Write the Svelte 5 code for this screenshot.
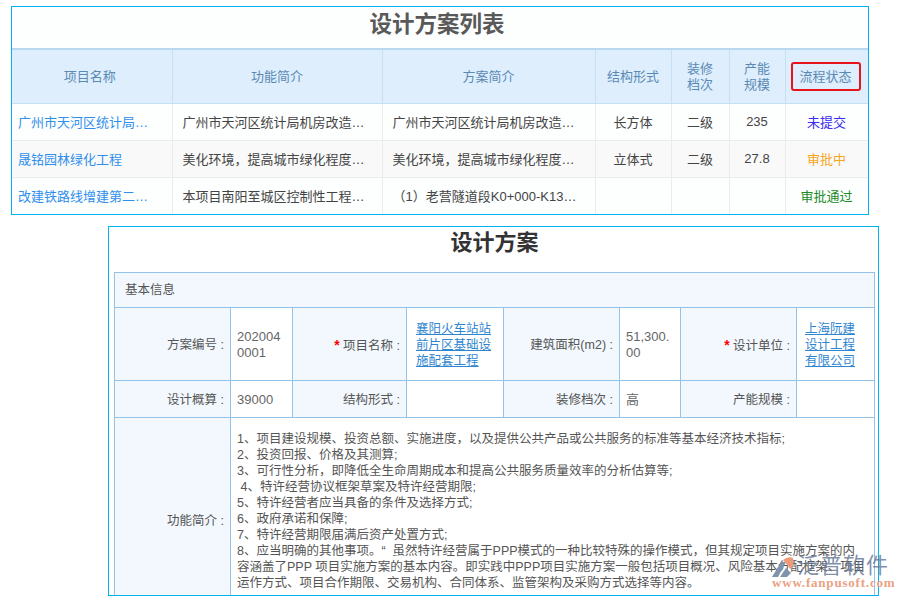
<script>
  const columns = [
    { name: '项目名称', width: 160, first: true },
    { name: '功能简介', width: 210 },
    { name: '方案简介', width: 213 },
    { name: '结构形式', width: 76 },
    { name: '装修档次', width: 58, narrow: true },
    { name: '产能规模', width: 56, narrow: true },
    { name: '流程状态', width: 83, boxed: true }
  ];
  const rows = [
    { project: '广州市天河区统计局机房改造工程', brief: '广州市天河区统计局机房改造工程项目功能简介', plan: '广州市天河区统计局机房改造工程方案简介内容', form: '长方体', grade: '二级', scale: '235', status: '未提交', tone: 'blue' },
    { project: '晟铭园林绿化工程', brief: '美化环境，提高城市绿化程度，改善生态环境', plan: '美化环境，提高城市绿化程度，改善生态环境', form: '立体式', grade: '二级', scale: '27.8', status: '审批中', tone: 'orange' },
    { project: '改建铁路线增建第二线工程项目', brief: '本项目南阳至城区控制性工程包括隧道及桥梁', plan: '（1）老营隧道段K0+000-K13+500工程方案', form: '', grade: '', scale: '', status: '审批通过', tone: 'green' }
  ];
  const lines = [
    '1、项目建设规模、投资总额、实施进度，以及提供公共产品或公共服务的标准等基本经济技术指标;',
    '2、投资回报、价格及其测算;',
    '3、可行性分析，即降低全生命周期成本和提高公共服务质量效率的分析估算等;',
    ' 4、特许经营协议框架草案及特许经营期限;',
    '5、特许经营者应当具备的条件及选择方式;',
    '6、政府承诺和保障;',
    '7、特许经营期限届满后资产处置方式;',
    '8、应当明确的其他事项。“  虽然特许经营属于PPP模式的一种比较特殊的操作模式，但其规定项目实施方案的内',
    '容涵盖了PPP 项目实施方案的基本内容。即实践中PPP项目实施方案一般包括项目概况、风险基本分配框架、项目',
    '运作方式、项目合作期限、交易机构、合同体系、监管架构及采购方式选择等内容。'
  ];
</script>

<div class="page">
  <section class="list">
    <h1>设计方案列表</h1>
    <table class="list-table">
      <colgroup>
        {#each columns as c}<col style="width:{c.width}px" />{/each}
      </colgroup>
      <thead>
        <tr>
          {#each columns as c}
            <th class:first={c.first}>
              {#if c.boxed}<span class="boxed">{c.name}</span>
              {:else if c.narrow}<span class="narrow">{c.name}</span>
              {:else}{c.name}{/if}
            </th>
          {/each}
        </tr>
      </thead>
      <tbody>
        {#each rows as r}
          <tr>
            <td class="left link"><div class="clip">{r.project}</div></td>
            <td class="left"><div class="clip">{r.brief}</div></td>
            <td class="left"><div class="clip">{r.plan}</div></td>
            <td>{r.form}</td>
            <td>{r.grade}</td>
            <td>{r.scale}</td>
            <td class={r.tone}>{r.status}</td>
          </tr>
        {/each}
      </tbody>
    </table>
  </section>

  <section class="detail">
    <h2>设计方案</h2>
    <table class="form-table">
      <colgroup>
        <col style="width:116px" /><col style="width:62px" /><col style="width:114px" /><col style="width:97px" />
        <col style="width:116px" /><col style="width:61px" /><col style="width:116px" /><col style="width:78px" />
      </colgroup>
      <tbody>
        <tr class="r-head"><td colspan="8" class="section">基本信息</td></tr>
        <tr class="r-one">
          <th>方案编号 :</th><td>2020040001</td>
          <th><i>*</i> 项目名称 :</th><td class="linked"><a href="#a">襄阳火车站站前片区基础设施配套工程</a></td>
          <th>建筑面积(m2) :</th><td>51,300.00</td>
          <th><i>*</i> 设计单位 :</th><td class="linked"><a href="#a">上海阮建设计工程有限公司</a></td>
        </tr>
        <tr class="r-two">
          <th>设计概算 :</th><td>39000</td>
          <th>结构形式 :</th><td></td>
          <th>装修档次 :</th><td>高</td>
          <th>产能规模 :</th><td></td>
        </tr>
        <tr>
          <th>功能简介 :</th>
          <td colspan="7" class="long">
            {#each lines as l}<div class="line">{l}</div>{/each}
          </td>
        </tr>
      </tbody>
    </table>
  </section>

  <div class="mark">
    <svg class="logo" viewBox="0 0 24 22" width="24" height="22" aria-hidden="true">
      <path d="M1 21 L10 6 L15 6 L7 21 Z" fill="#7f93ad" />
      <path d="M12 4 Q17 0 22 2 Q24 9 19 13 Q16 8 12 4 Z" fill="#ec9a78" />
      <path d="M9 21 L15 12 L20 17 L16 21 Z" fill="#7f93ad" />
    </svg>
    <div class="mark-text">
      <div class="mark-cn">泛普软件</div>
      <div class="mark-en">www.fanpusoft.com</div>
    </div>
  </div>
</div>

<style>
  :global(body) {
    margin: 0;
    background: #fff;
  }
  .page {
    position: relative;
    width: 900px;
    height: 600px;
    overflow: hidden;
    padding: 6px 0 0 11px;
    box-sizing: border-box;
    font-family: "Liberation Sans", "Noto Sans CJK SC", sans-serif;
    font-size: 13px;
    color: #444;
  }
  table {
    border-collapse: collapse;
    table-layout: fixed;
  }
  .list {
    width: 858px;
    height: 209px;
    box-sizing: border-box;
    border: 1px solid #00b2ee;
    background: #fdfefe;
    overflow: hidden;
  }
  h1 {
    margin: 0;
    height: 41px;
    padding-right: 6px;
    box-sizing: border-box;
    line-height: 35px;
    text-align: center;
    font-size: 22.5px;
    font-weight: 700;
    color: #595959;
  }
  .list-table {
    width: 856px;
  }
  .list-table th {
    height: 54px;
    padding: 2px 0 0;
    box-sizing: border-box;
    background: #deeefc;
    border-top: 2px solid #b8d8f2;
    border-bottom: 1px solid #c5dff3;
    border-right: 1px solid #c5dff3;
    font-weight: 400;
    color: #5a8ab4;
    text-align: center;
    line-height: 16px;
  }
  .list-table th.first {
    padding-right: 4px;
  }
  .narrow {
    display: block;
    width: 26px;
    margin: 0 auto;
  }
  .boxed {
    display: block;
    box-sizing: border-box;
    width: 70px;
    height: 29px;
    line-height: 25px;
    margin: -2px 0 0 5px;
    border: 2px solid #e8141c;
    border-radius: 3px;
  }
  .list-table td {
    height: 36px;
    padding: 0;
    border-right: 1px solid #e9ecef;
    border-bottom: 1px solid #e9ecef;
    text-align: center;
    color: #444;
  }
  .list-table td.left {
    text-align: left;
    padding: 0 15px 0 10px;
  }
  .list-table td.link {
    padding: 0 14px 0 6px;
    color: #2f8fec;
  }
  .clip {
    overflow: hidden;
    white-space: nowrap;
    text-overflow: ellipsis;
  }
  .list-table tr:nth-child(2) td {
    background: #f9f9f9;
  }
  .list-table td.blue { color: #3a2df0; }
  .list-table td.orange { color: #f6a623; }
  .list-table td.green { color: #1c8c2a; }
  .detail {
    width: 771px;
    height: 370px;
    margin: 11px 0 0 97px;
    box-sizing: border-box;
    border: 1px solid #00b2ee;
    padding: 0 3px 0 5px;
    background: #fff;
    overflow: hidden;
  }
  h2 {
    margin: 0;
    height: 45px;
    line-height: 32px;
    text-align: center;
    font-size: 22px;
    font-weight: 700;
    color: #333;
  }
  .form-table {
    width: 760px;
    font-size: 12.5px;
  }
  .form-table th,
  .form-table td {
    border: 1px solid #94c3ea;
    font-weight: 400;
    line-height: 16px;
    word-break: break-all;
  }
  .form-table th {
    background: #f2f8fe;
    color: #555;
    text-align: right;
    padding: 2px 6px 0 0;
  }
  .form-table td {
    color: #666;
    text-align: left;
    padding: 2px 6px 0;
    font-size: 13px;
  }
  .form-table td.linked {
    padding: 2px 8px 0 9px;
    font-size: 12.5px;
  }
  .form-table td.linked:last-child {
    padding-left: 8px;
  }
  .form-table td.section {
    height: 34px;
    background: #f2f8fe;
    color: #555;
    padding: 0 0 0 10px;
    font-size: 12.5px;
  }
  .r-one th, .r-one td { height: 70px; }
  .r-two th, .r-two td { height: 34px; }
  .form-table td.long {
    padding-top: 13px;
    padding-bottom: 31px;
    color: #555;
    font-size: 12.5px;
  }
  .line {
    white-space: pre;
    height: 16px;
  }
  i {
    font-style: normal;
    font-weight: 700;
    font-size: 14px;
    color: #f00;
  }
  a {
    color: #2f86d0;
    text-decoration: underline;
  }
  .mark {
    position: absolute;
    left: 771px;
    top: 551px;
    display: flex;
    align-items: flex-start;
    gap: 2px;
    pointer-events: none;
  }
  .logo {
    margin-top: 5px;
  }
  .mark-cn {
    font-family: "Noto Sans CJK SC", sans-serif;
    font-size: 22px;
    line-height: 24px;
    letter-spacing: 1px;
    color: rgba(95, 115, 145, 0.8);
  }
  .mark-en {
    margin: 1px 0 0 -25px;
    font-family: "Liberation Serif", serif;
    font-size: 13px;
    font-weight: 700;
    line-height: 14px;
    letter-spacing: 0.8px;
    color: #e9a183;
    white-space: nowrap;
  }
</style>
